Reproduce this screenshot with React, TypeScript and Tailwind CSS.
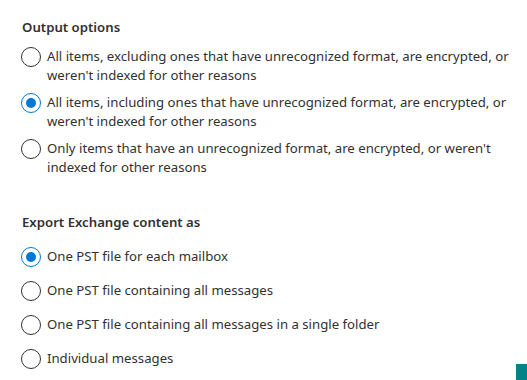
import React from "react";

function Radio({ checked }: { checked?: boolean }) {
  return (
    <span
      className={
        checked
          ? "flex h-5 w-5 shrink-0 items-center justify-center rounded-full border border-[#0078d4]"
          : "flex h-5 w-5 shrink-0 items-center justify-center rounded-full border border-[#323130]"
      }
    >
      {checked ? <span className="h-[10px] w-[10px] rounded-full bg-[#0078d4]" /> : null}
    </span>
  );
}

function Option({ checked, children }: { checked?: boolean; children: React.ReactNode }) {
  return (
    <div className="flex min-h-[26px] items-start">
      <Radio checked={checked} />
      <div className="ml-[6px] whitespace-nowrap leading-[19px]">{children}</div>
    </div>
  );
}

export default function App() {
  return (
    <div className="relative h-[380px] w-[527px] overflow-hidden bg-white font-['Noto_Sans',sans-serif] text-[13.2px] text-[#323130]">
      <div className="pl-[21px] pt-[17px]">
        <div className="ml-[1px] font-semibold leading-[20px]">Output options</div>
        <div className="mt-[10px] flex flex-col gap-[8px]">
          <Option>
            All items, excluding ones that have unrecognized format, are encrypted, or
            <br />
            weren't indexed for other reasons
          </Option>
          <Option checked>
            All items, including ones that have unrecognized format, are encrypted, or
            <br />
            weren't indexed for other reasons
          </Option>
          <Option>
            Only items that have an unrecognized format, are encrypted, or weren't
            <br />
            indexed for other reasons
          </Option>
        </div>
        <div className="ml-[1px] mt-[35px] font-semibold leading-[20px]">Export Exchange content as</div>
        <div className="mt-[15px] flex flex-col gap-[8px]">
          <Option checked>One PST file for each mailbox</Option>
          <Option>One PST file containing all messages</Option>
          <Option>One PST file containing all messages in a single folder</Option>
          <Option>Individual messages</Option>
        </div>
      </div>
      <div className="absolute bottom-0 right-0 h-[16px] w-[11px] bg-[#038387]" />
    </div>
  );
}
